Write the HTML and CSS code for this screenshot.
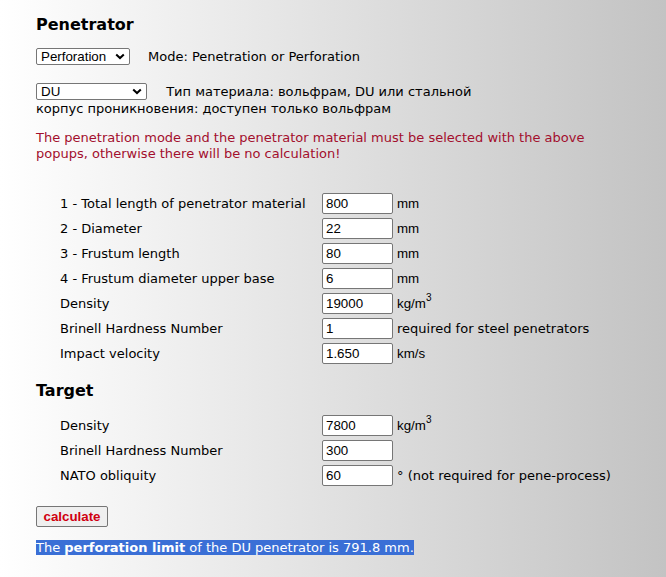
FILE: index.html
```html
<!DOCTYPE html>
<html lang="en">
<head>
    <meta charset="UTF-8">
    <title>Penetrator</title>
    <link rel="stylesheet" href="styles.css">
</head>
<body>

    <div class="page">
        <h2>Penetrator</h2>

        <div class="choice">
            <select id="mode" class="mode-select">
                <option value="pene">Penetration</option>
                <option value="perfo" selected>Perforation</option>
            </select>
            <span class="hint">Mode: Penetration or Perforation</span>
        </div>

        <div class="choice material">
            <select id="material" class="material-select">
                <option value="wha">Tungsten</option>
                <option value="du" selected>DU</option>
                <option value="steel">Steel</option>
            </select>
            <span class="hint">Тип материала: вольфрам, DU или стальной<br>корпус проникновения: доступен только вольфрам</span>
        </div>

        <p class="warning">The penetration mode and the penetrator material must be selected with the above popups, otherwise there will be no calculation!</p>

        <div class="fields penetrator">
            <label for="len">1 - Total length of penetrator material</label>
            <input type="text" id="len" value="800">
            <span class="unit">mm</span>

            <label for="dia">2 - Diameter</label>
            <input type="text" id="dia" value="22">
            <span class="unit">mm</span>

            <label for="flen">3 - Frustum length</label>
            <input type="text" id="flen" value="80">
            <span class="unit">mm</span>

            <label for="fdia">4 - Frustum diameter upper base</label>
            <input type="text" id="fdia" value="6">
            <span class="unit">mm</span>

            <label for="pdens">Density</label>
            <input type="text" id="pdens" value="19000">
            <span class="unit">kg/m<sup>3</sup></span>

            <label for="pbhn">Brinell Hardness Number</label>
            <input type="text" id="pbhn" value="1">
            <span class="note">required for steel penetrators</span>

            <label for="vel">Impact velocity</label>
            <input type="text" id="vel" value="1.650">
            <span class="unit">km/s</span>
        </div>

        <h2 class="target-title">Target</h2>

        <div class="fields target">
            <label for="tdens">Density</label>
            <input type="text" id="tdens" value="7800">
            <span class="unit">kg/m<sup>3</sup></span>

            <label for="tbhn">Brinell Hardness Number</label>
            <input type="text" id="tbhn" value="300">
            <span class="unit"></span>

            <label for="obl">NATO obliquity</label>
            <input type="text" id="obl" value="60">
            <span class="note">° (not required for pene-process)</span>
        </div>

        <button type="button" class="calc-btn">calculate</button>

        <p class="result"><span class="result-text">The <b>perforation limit</b> of the DU penetrator is 791.8 mm.</span></p>
    </div>

</body>
</html>
```

FILE: styles.css
```css
html {
    min-height: 100%;
    background: linear-gradient(to right, #ffffff, #c3c3c3);
}

body {
    margin: 8px;
    font-family: "DejaVu Sans", Verdana, sans-serif;
    font-size: 13px;
    color: #000;
}

.page {
    padding-left: 28px;
}

h2 {
    font-size: 16px;
    font-weight: bold;
    margin: 0;
    padding-top: 7px;
    height: 33px;
    line-height: 20px;
}

.choice {
    display: flex;
    align-items: center;
    height: 17px;
    margin-bottom: 18px;
}

.choice.material {
    display: block;
    height: auto;
    margin-bottom: 0;
    line-height: 17px;
}

/* selects get a drawn chevron instead of the native arrow */
select {
    appearance: none;
    font-family: "Liberation Sans", Arial, sans-serif;
    font-size: 13.33px;
    height: 17px;
    line-height: 15px;
    padding: 0 0 0 4px;
    border: 1px solid #767676;
    border-radius: 2px;
    background: #fff url("data:image/svg+xml,%3Csvg xmlns='http://www.w3.org/2000/svg' width='10' height='7' viewBox='0 0 10 7'%3E%3Cpath d='M1.2 1.4 L5 5 L8.8 1.4' fill='none' stroke='%23000' stroke-width='2'/%3E%3C/svg%3E") no-repeat right 4px center;
    color: #000;
    vertical-align: top;
}

.mode-select {
    width: 94px;
    margin-right: 18px;
}

.material-select {
    width: 111px;
    margin-right: 15px;
}

.warning {
    color: #a30f2d;
    margin: 13px 0 0;
    line-height: 16px;
    max-width: 570px;
}

.fields {
    display: grid;
    grid-template-columns: 258px 71px auto;
    grid-auto-rows: 25px;
    column-gap: 4px;
    align-items: center;
    margin-left: 24px;
}

.note {
    white-space: nowrap;
}

.penetrator {
    margin-top: 29px;
    margin-bottom: 12px;
}

.target {
    margin-bottom: 18px;
}

.target-title {
    padding-top: 3px;
    height: 32px;
}

input[type="text"] {
    height: 21px;
    box-sizing: border-box;
    width: 71px;
    padding: 1px 3px;
    font-family: "Liberation Sans", Arial, sans-serif;
    font-size: 13.33px;
    border: 1px solid #767676;
    border-radius: 2px;
    background: #fff;
}

.unit {
    font-family: "Liberation Sans", Arial, sans-serif;
    font-size: 13.33px;
}

.unit sup {
    font-size: 10px;
    vertical-align: 7px;
    line-height: 0;
}

.calc-btn {
    display: block;
    width: 72px;
    height: 21px;
    padding: 0;
    font-family: "Liberation Sans", Arial, sans-serif;
    font-size: 13.33px;
    font-weight: bold;
    color: #d00010;
    background: #efefef;
    border: 1px solid #767676;
    border-radius: 2px;
}

.result {
    margin: 12px 0 0;
    line-height: 17px;
}

.result-text {
    background: #3a6fd6;
    color: #fff;
}
```
